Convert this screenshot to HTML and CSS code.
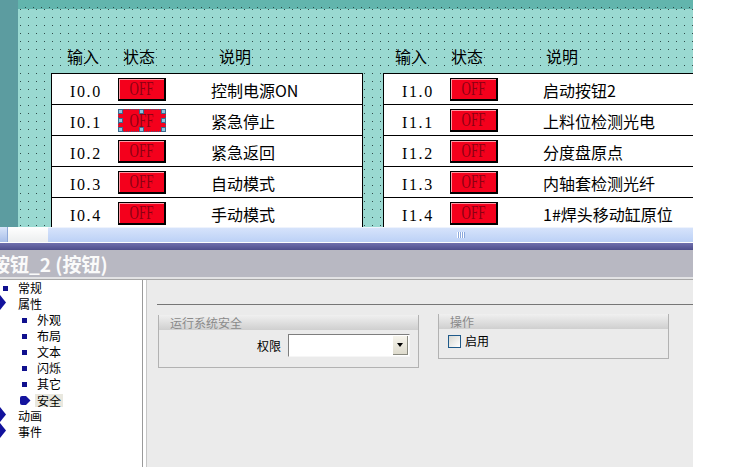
FILE: index.html
```html
<!DOCTYPE html>
<html lang="zh-CN">
<head>
<meta charset="utf-8">
<title>按钮_2 (按钮)</title>
<link rel="stylesheet" href="styles.css">
</head>
<body>
<div class="app">
  <div class="canvas">
    <div class="strip"></div>
    <div class="stage">
      <div class="band"></div>
      <div class="tables">
        <section class="io io-left">
          <div class="heads"><span>输入</span><span>状态</span><span>说明</span></div>
          <div class="table">
            <div class="row"><span class="addr">I0.0</span><span class="btn"><span>OFF</span></span><span class="desc">控制电源ON</span></div>
            <div class="row"><span class="addr">I0.1</span><span class="btn sel"><span>OFF</span><i class="h h-tl"></i><i class="h h-tc"></i><i class="h h-tr"></i><i class="h h-ml"></i><i class="h h-mr"></i><i class="h h-bl"></i><i class="h h-bc"></i><i class="h h-br"></i></span><span class="desc">紧急停止</span></div>
            <div class="row"><span class="addr">I0.2</span><span class="btn"><span>OFF</span></span><span class="desc">紧急返回</span></div>
            <div class="row"><span class="addr">I0.3</span><span class="btn"><span>OFF</span></span><span class="desc">自动模式</span></div>
            <div class="row"><span class="addr">I0.4</span><span class="btn"><span>OFF</span></span><span class="desc">手动模式</span></div>
          </div>
        </section>
        <section class="io io-right">
          <div class="heads"><span>输入</span><span>状态</span><span>说明</span></div>
          <div class="table">
            <div class="row"><span class="addr">I1.0</span><span class="btn"><span>OFF</span></span><span class="desc">启动按钮2</span></div>
            <div class="row"><span class="addr">I1.1</span><span class="btn"><span>OFF</span></span><span class="desc">上料位检测光电</span></div>
            <div class="row"><span class="addr">I1.2</span><span class="btn"><span>OFF</span></span><span class="desc">分度盘原点</span></div>
            <div class="row"><span class="addr">I1.3</span><span class="btn"><span>OFF</span></span><span class="desc">内轴套检测光纤</span></div>
            <div class="row"><span class="addr">I1.4</span><span class="btn"><span>OFF</span></span><span class="desc">1#焊头移动缸原位</span></div>
          </div>
        </section>
      </div>
    </div>
  </div>
  <div class="hscroll">
    <div class="hs-arrow"></div>
    <div class="hs-track"></div>
    <div class="hs-thumb"><span class="grip"></span></div>
  </div>
  <div class="edge"></div>
  <div class="purple"></div>
  <div class="title"><span>按钮_2 (按钮)</span></div>
  <div class="sep"></div>
  <div class="props">
    <ul class="tree">
      <li class="l0"><i class="sq"></i><span>常规</span></li>
      <li class="l0 arrow"><svg class="big" width="6" height="15" viewBox="0 0 6 15"><polygon points="0,0 6,7.5 0,15" fill="#12129c"/></svg><span>属性</span></li>
      <li class="l1"><i class="sq"></i><span>外观</span></li>
      <li class="l1"><i class="sq"></i><span>布局</span></li>
      <li class="l1"><i class="sq"></i><span>文本</span></li>
      <li class="l1"><i class="sq"></i><span>闪烁</span></li>
      <li class="l1"><i class="sq"></i><span>其它</span></li>
      <li class="l1 cur"><svg class="ptr" width="12" height="11" viewBox="0 0 12 11"><path d="M1 3 Q1 1 3 1 L7 1 L11.5 5.5 L7 10 L3 10 Q1 10 1 8 Z" fill="#14149e"/></svg><span class="hl">安全</span></li>
      <li class="l0 arrow"><svg class="big" width="6" height="15" viewBox="0 0 6 15"><polygon points="0,0 6,7.5 0,15" fill="#12129c"/></svg><span>动画</span></li>
      <li class="l0 arrow"><svg class="big" width="6" height="15" viewBox="0 0 6 15"><polygon points="0,0 6,7.5 0,15" fill="#12129c"/></svg><span>事件</span></li>
    </ul>
    <div class="pane">
      <div class="rule"></div>
      <div class="groups">
        <div class="group g1">
          <div class="ghead">运行系统安全</div>
          <div class="gbody">
            <span class="lbl">权限</span>
            <span class="combo"><span class="cbtn"><i class="tri"></i></span></span>
          </div>
        </div>
        <div class="group g2">
          <div class="ghead">操作</div>
          <div class="gbody">
            <span class="check"></span><span class="chk-lbl">启用</span>
          </div>
        </div>
      </div>
    </div>
  </div>
</div>
</body>
</html>
```
FILE: styles.css
```css
html, body {
  margin: 0;
  padding: 0;
  background: #ffffff;
  overflow: hidden;
}
body {
  width: 755px;
  height: 467px;
  font-family: "Noto Sans CJK SC", "Noto Sans", sans-serif;
  color: #000;
}
.app {
  width: 693px;
  height: 467px;
  display: flex;
  flex-direction: column;
  overflow: hidden;
}

/* ---------- HMI canvas ---------- */
.canvas {
  height: 227px;
  flex: none;
  display: flex;
  overflow: hidden;
}
.strip {
  width: 18px;
  flex: none;
  background: #5c9ca0;
}
.stage {
  width: 675px;
  flex: none;
  display: flex;
  flex-direction: column;
  overflow: hidden;
}
.band {
  height: 9px;
  flex: none;
  background-image:
    linear-gradient(90deg, #62b5ad 7px, transparent 7px),
    linear-gradient(180deg, #62b5ad 7px, #2c4a47 7px);
  background-size: 8px 8px;
}
.tables {
  flex: 1;
  display: flex;
  gap: 20px;
  padding: 37px 0 0 33px;
  background-image:
    linear-gradient(90deg, #9ad9d1 7px, transparent 7px),
    linear-gradient(180deg, #9ad9d1 7px, #2f4b49 7px);
  background-size: 8px 8px;
  background-position: 3px 1px;
}
.io {
  flex: none;
}
.io-left { width: 312px; }
.io-right { width: 330px; }

.heads {
  display: grid;
  grid-template-columns: 56px 96px 1fr;
  height: 20px;
  line-height: 20px;
  font-size: 16px;
  padding-left: 16px;
  margin-bottom: 7px;
  white-space: nowrap;
}
.io-right .heads {
  padding-left: 12px;
  grid-template-columns: 56px 95px 1fr;
}

.table {
  border: 1px solid #000;
  border-bottom: none;
  background: #fff;
}
.row {
  height: 31px;
  box-sizing: border-box;
  border-bottom: 1px solid #000;
  padding-top: 1px;
  display: flex;
  align-items: center;
  white-space: nowrap;
}
.addr {
  width: 48px;
  padding-left: 18px;
  margin-top: 4px;
  font-family: "Liberation Serif", serif;
  font-size: 16px;
  letter-spacing: 1.6px;
  line-height: 18px;
}
.btn {
  position: relative;
  width: 48px;
  height: 23px;
  flex: none;
  box-sizing: border-box;
  background: #f4001c;
  border: 1px solid #000;
  border-right-width: 2px;
  border-bottom-width: 2px;
  box-shadow: inset 1px 1px 0 #ff98a4;
  display: flex;
  align-items: center;
  justify-content: center;
  color: #8c0012;
  font-family: "Liberation Serif", serif;
  font-size: 18px;
  line-height: 18px;
}
.btn > span {
  display: inline-block;
  transform: scaleX(0.72);
}
.btn.sel {
  border: 1px dotted #3d5f86;
  box-shadow: none;
}
.h {
  position: absolute;
  width: 5px;
  height: 5px;
  box-sizing: border-box;
  background: #8ec4e0;
  border: 1px solid #3d6a8c;
}
.h-tl { left: -1px; top: -1px; }
.h-tc { left: 20px; top: -1px; }
.h-tr { right: -1px; top: -1px; }
.h-ml { left: -1px; top: 8px; }
.h-mr { right: -1px; top: 8px; }
.h-bl { left: -1px; bottom: -1px; }
.h-bc { left: 20px; bottom: -1px; }
.h-br { right: -1px; bottom: -1px; }

.desc {
  margin-left: 45px;
  font-size: 16px;
  line-height: 18px;
}

/* ---------- scrollbar & title ---------- */
.hscroll {
  height: 15px;
  flex: none;
  display: flex;
  background: #c6d7f5;
}
.hs-arrow {
  width: 7px;
  background: linear-gradient(#d8e4f9, #a9bfe9);
  border-right: 1px solid #8ea8d8;
}
.hs-track {
  width: 40px;
  background: linear-gradient(#ffffff, #eceeef);
}
.hs-thumb {
  flex: 1;
  display: flex;
  align-items: center;
  padding-left: 409px;
  background: linear-gradient(#d6e3fb, #bcd1f6);
  border-top: 1px solid #eef3fd;
}
.grip {
  width: 8px;
  height: 6px;
  background: repeating-linear-gradient(90deg, #ffffff 0 1px, #8aa7dc 1px 2px);
}
.edge {
  height: 1px;
  flex: none;
  background: #ffffff;
}
.purple {
  height: 7px;
  flex: none;
  background: linear-gradient(#7070ae, #4e4e8c);
}
.title {
  height: 27px;
  flex: none;
  background: #b8b8c2;
  color: #fafafa;
  font-weight: bold;
  font-size: 19px;
  line-height: 27px;
  white-space: nowrap;
  overflow: hidden;
}
.title span {
  display: inline-block;
  margin-left: -9px;
}
.sep {
  flex: none;
  height: 0;
  border-top: 2px solid #e2e2e4;
  border-bottom: 1px solid #a8a8a8;
}

/* ---------- properties ---------- */
.props {
  flex: 1;
  display: flex;
  min-height: 0;
}
.tree {
  width: 142px;
  flex: none;
  margin: 0 3px 0 0;
  padding: 0;
  list-style: none;
  background: #ffffff;
  border-right: 1px solid #9a9a9a;
  font-size: 12px;
}
.tree li {
  height: 16px;
  line-height: 16px;
  display: flex;
  align-items: center;
  white-space: nowrap;
}
.sq {
  width: 5px;
  height: 5px;
  flex: none;
  background: #10108e;
  margin-right: 10px;
}
.l0 { padding-left: 3px; }
.l0.arrow { padding-left: 0; }
.big {
  flex: none;
  margin-right: 12px;
  margin-top: -4px;
}
.l1 { padding-left: 22px; }
.l1.cur { padding-left: 19px; }
.ptr {
  flex: none;
  margin-right: 4px;
}
.hl {
  display: inline-block;
  background: #e9e8df;
  padding: 0 2px;
  line-height: 13px;
  height: 13px;
}

.pane {
  flex: 1;
  background: #ebebeb;
  border-left: 1px solid #c6c6c6;
  padding-left: 10px;
}
.rule {
  margin-top: 24px;
  border-top: 1px solid #767676;
}
.groups {
  display: flex;
  align-items: flex-start;
  padding: 10px 0 0 1px;
}
.group {
  box-sizing: border-box;
  border: 1px solid #b2b2b2;
  border-top: none;
  background: #ebebeb;
}
.g1 {
  width: 261px;
  height: 53px;
}
.g2 {
  width: 231px;
  height: 45px;
  margin-left: 19px;
  margin-top: -1px;
}
.ghead {
  height: 15px;
  line-height: 15px;
  padding-left: 11px;
  font-size: 12px;
  color: #8a8a8a;
  background: linear-gradient(#f0f0f0, #cfcfcf);
  white-space: nowrap;
}
.g1 .gbody {
  display: flex;
  justify-content: flex-end;
  align-items: center;
  padding: 4px 8px 0 0;
}
.lbl {
  font-size: 12px;
  margin-right: 7px;
}
.combo {
  width: 122px;
  height: 23px;
  box-sizing: border-box;
  background: #ffffff;
  border: 1px solid;
  border-color: #7e7e7e #f6f6f6 #f6f6f6 #7e7e7e;
  display: flex;
  justify-content: flex-end;
  align-items: center;
  padding-right: 1px;
}
.cbtn {
  width: 15px;
  height: 19px;
  box-sizing: border-box;
  background: linear-gradient(#f6f4ec, #dedbcd);
  border-right: 1px solid #8a8a80;
  border-bottom: 1px solid #8a8a80;
  display: flex;
  align-items: center;
  justify-content: center;
}
.tri {
  width: 0;
  height: 0;
  border-left: 3.5px solid transparent;
  border-right: 3.5px solid transparent;
  border-top: 4px solid #000;
}
.g2 .gbody {
  display: flex;
  align-items: center;
  padding: 5px 0 0 9px;
}
.check {
  width: 13px;
  height: 13px;
  flex: none;
  box-sizing: border-box;
  border: 1px solid #1f5a8a;
  background: linear-gradient(135deg, #d8d8d2, #ffffff);
  margin-right: 4px;
}
.chk-lbl {
  font-size: 12px;
  line-height: 14px;
}
```
